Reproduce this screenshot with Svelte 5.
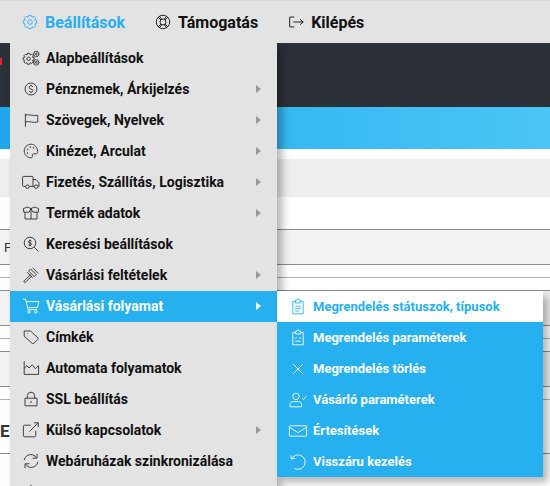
<script>
  const c = (x, y, r) => `M${x - r} ${y}a${r} ${r} 0 1 0 ${2 * r} 0a${r} ${r} 0 1 0 ${-2 * r} 0`;

  function gear(x, y, outer, inner, teeth = 8) {
    let d = '';
    const step = (Math.PI * 2) / teeth;
    for (let i = 0; i < teeth; i++) {
      const a = i * step;
      const pts = [
        [inner, a - step * 0.5],
        [outer, a - step * 0.25],
        [outer, a + step * 0.25]
      ];
      for (const [r, t] of pts) {
        d += `${d ? 'L' : 'M'}${(x + r * Math.cos(t)).toFixed(2)} ${(y + r * Math.sin(t)).toFixed(2)}`;
      }
    }
    return d + 'Z';
  }

  const icons = {
    gear: gear(10, 10, 7.5, 5.8) + c(10, 10, 2.6),
    lifering: c(10, 10, 7.5) + c(10, 10, 3.3) + 'M4.7 4.7l3 3M15.3 4.7l-3 3M4.7 15.3l3-3M15.3 15.3l-3-3M6.2 3.6l2.2 3.2M13.8 3.6l-2.2 3.2M6.2 16.4l2.2-3.2M13.8 16.4l-2.2-3.2',
    logout: 'M8 4.5H3v11h5M7 10h11M14.5 7l3.5 3-3.5 3',
    gears: gear(7, 11, 7, 5.2) + c(7, 11, 2.2) + gear(16.5, 5, 3.6, 2.6, 6) + c(16.5, 5, 1.1) + gear(16.5, 15.5, 3.6, 2.6, 6) + c(16.5, 15.5, 1.1),
    dollar: c(10, 10, 7.5) + 'M12.4 7.6C12 6.4 11 6 10 6 8.6 6 7.6 6.8 7.6 8c0 2.8 4.8 1.4 4.8 4 0 1.2-1 2-2.4 2-1.1 0-2-.5-2.4-1.6M10 4.8V6M10 14v1.2',
    flag: 'M3 2V18.5M3 4c5-1.8 10 1.8 15.5 0v8.5c-5.5 1.8-10.5-1.8-15.5 0',
    palette: 'M10 1.5C5.3 1.5 1.5 5.3 1.5 10s3.8 8.5 8.5 8.5c1.5 0 2-1.1 1.7-2.2-.4-1.4.3-2.8 2-2.8h2.7c1.3 0 1.9-1 1.9-2.8 0-5.1-3.800-9.200-8.300-9.200z' + c(5.8, 8, .5) + c(9, 5, .5) + c(13.2, 6, .5) + c(5.8, 12.5, .5),
    truck: 'M3 15.5H.5a1 1 0 0 1-1-1V4a1 1 0 0 1 1-1h11a1 1 0 0 1 1 1v11.5H8M12.500 7h4l3.500 4v4.500h-1M12.500 15.500H14' + c(5.5, 15.8, 2.2) + c(16.5, 15.8, 2.2),
    box: 'M2.5 9v8.5h15V9M.5 4.500L5.500 2.500 10 4.500 7.500 9H1zM19.500 4.500L14.500 2.500 10 4.500 12.500 9H19zM10 4.500v13',
    searchDollar: c(8.7, 8.7, 7.2) + 'M14 14l5 5M10.700 6.800c-.3-.8-1-1.200-2-1.200-1.100 0-2 .6-2 1.500 0 2.200 4.100 1.100 4.100 3.300 0 .9-.9 1.500-2.100 1.500-.9 0-1.700-.4-2-1.200M8.700 4.500V13',
    gavel: 'M9.500 2.500l7 7-2.500 2.500-7-7zM12 1l7 7M5 6.500l7 7M9.500 9.500L1.500 17.300a1.200 1.200 0 0 0 1.700 1.700l8-7.900',
    cart: 'M0 1.500h3.300l3 13h11.500M4 4.500H20l-2 7.500H5.700' + c(7.5, 17.3, 1.5) + c(16, 17.3, 1.5),
    tag: 'M1.500 2.500h8l9 8.500a1.400 1.400 0 0 1 0 2l-5 5a1.400 1.400 0 0 1-2 0l-10-9zM5.500 6h.8',
    chart: 'M1.500 1.500v16.500h18V7l-4 4-4-5-4 4-2.500-3-3.500 3.500',
    lock: 'M2.500 9h15v9.500h-15zM5.500 9V6a4.500 4.500 0 0 1 9 0v3M10 12.500v2.500',
    external: 'M16 11v6a1.500 1.500 0 0 1-1.500 1.500H2A1.500 1.500 0 0 1 .5 17V5.500A1.500 1.500 0 0 1 2 4h7.500M8 12L19 1M13.500 1H19v5.500',
    sync: 'M1.500 9C2 5 5.500 2 9.800 2c3 0 5.300 1.300 6.700 3.800M17.500 1v5.500h-5.500M18.500 11c-.5 4-4 7-8.300 7-3 0-5.300-1.300-6.700-3.800M2.500 19v-5.500h5.500',
    last: 'M10 1v8',
    clipboard: 'M7 3H3.500v15.500h13V3H13M7 1.500h1.500a1.500 1.500 0 0 1 3 0H13V5H7zM6.500 9h7M6.500 12h7M6.500 15h5',
    clipboardCheck: 'M7 3H3.500v15.500h13V3H13M7 1.500h1.500a1.500 1.500 0 0 1 3 0H13V5H7zM6 9.500l1 1 1.500-1.500M11 10h3M6.500 14h7',
    cross: 'M4 4l12 12M16 4L4 16',
    userCheck: c(7.5, 5.5, 4) + 'M0 18.500v-2.500c0-2.500 2-4 4.500-4h6c2.500 0 4 1.500 4 4v2.500zM15 7.500l1.800 1.800 3.700-3.800',
    mail: 'M0 3.500h20a.8.8 0 0 1 .8.8v11.400a.8.8 0 0 1-.8.8H0a.8.8 0 0 1-.8-.8V4.300a.8.8 0 0 1 .8-.8zM-.5 5.500L10 12l10.500-6.500',
    undo: 'M1 1.500l.8 4.800 4.800-.8M1.800 6.300A9 9 0 1 1 6 18.200'
  };

  const menu = [
    { label: 'Alapbeállítások', icon: 'gears' },
    { label: 'Pénznemek, Árkijelzés', icon: 'dollar', sub: true },
    { label: 'Szövegek, Nyelvek', icon: 'flag', sub: true },
    { label: 'Kinézet, Arculat', icon: 'palette', sub: true },
    { label: 'Fizetés, Szállítás, Logisztika', icon: 'truck', sub: true },
    { label: 'Termék adatok', icon: 'box', sub: true },
    { label: 'Keresési beállítások', icon: 'searchDollar' },
    { label: 'Vásárlási feltételek', icon: 'gavel', sub: true },
    { label: 'Vásárlási folyamat', icon: 'cart', sub: true, active: true },
    { label: 'Címkék', icon: 'tag' },
    { label: 'Automata folyamatok', icon: 'chart' },
    { label: 'SSL beállítás', icon: 'lock' },
    { label: 'Külső kapcsolatok', icon: 'external', sub: true },
    { label: 'Webáruházak szinkronizálása', icon: 'sync' },
    { label: '', icon: 'last' }
  ];

  const submenu = [
    { label: 'Megrendelés státuszok, típusok', icon: 'clipboard', active: true },
    { label: 'Megrendelés paraméterek', icon: 'clipboardCheck' },
    { label: 'Megrendelés törlés', icon: 'cross' },
    { label: 'Vásárló paraméterek', icon: 'userCheck' },
    { label: 'Értesítések', icon: 'mail' },
    { label: 'Visszáru kezelés', icon: 'undo' }
  ];

  const rows = [
    { cls: 'r35 tint', text: 'F', type: 'plain' },
    { cls: 'r13' },
    { cls: 'r13' },
    { cls: 'r35 tint' },
    { cls: 'r13' },
    { cls: 'r13' },
    { cls: 'r35 tint' },
    { cls: 'r13' },
    { cls: 'r54', text: 'E', type: 'strong' },
    { cls: 'r54' }
  ];
</script>

{#snippet icon(name)}
  <svg viewBox="0 0 20 20" aria-hidden="true"><path d={icons[name]} /></svg>
{/snippet}

<div class="page">
  <nav class="topbar">
    <a class="top-link current">{@render icon('gear')}Beállítások</a>
    <a class="top-link">{@render icon('lifering')}Támogatás</a>
    <a class="top-link">{@render icon('logout')}Kilépés</a>
  </nav>

  <header class="dark"><span class="alert"></span></header>
  <div class="band"></div>
  <div class="gray-box"></div>

  <div class="table">
    {#each rows as row}
      <div class="row {row.cls}">
        {#if row.text}<span class={row.type}>{row.text}</span>{/if}
      </div>
    {/each}
  </div>

  <ul class="menu">
    {#each menu as item}
      <li class="item" class:active={item.active}>
        {@render icon(item.icon)}
        <span>{item.label}</span>
        {#if item.sub}<i class="arrow"></i>{/if}
      </li>
    {/each}
  </ul>

  <ul class="submenu">
    {#each submenu as item}
      <li class="sub-item" class:active={item.active}>
        {@render icon(item.icon)}
        <span>{item.label}</span>
      </li>
    {/each}
  </ul>
</div>

<style>
  :global(body) {
    margin: 0;
    background: #fff;
  }

  .page {
    position: relative;
    height: 486px;
    overflow: hidden;
    font-family: Roboto, "Liberation Sans", sans-serif;
    color: #111;
  }

  svg {
    flex: none;
    width: 16px;
    height: 16px;
    overflow: visible;
    fill: none;
    stroke: currentColor;
    stroke-width: 1.1;
  }

  .topbar {
    position: relative;
    z-index: 2;
    display: flex;
    align-items: center;
    height: 42px;
    padding-left: 21px;
    gap: 29px;
    background: #e3e3e3;
    border-top: 1px solid #d9d9d9;
  }

  .top-link {
    display: flex;
    align-items: center;
    gap: 6px;
    font-size: 16px;
    font-weight: 700;
    color: #111;
  }

  .top-link svg {
    width: 18px;
    height: 18px;
    stroke-width: 1;
  }

  .top-link.current {
    color: #27b0f0;
  }

  .dark {
    height: 64px;
    background: #2c3039;
    position: relative;
  }

  .alert {
    position: absolute;
    left: 0;
    top: 15px;
    width: 2px;
    height: 7px;
    background: #e0262e;
  }

  .band {
    height: 42px;
    background: linear-gradient(90deg, #1fa9ec, #4ac6f6);
  }

  .gray-box {
    height: 38px;
    margin: 10px 0 32px;
    background: #eee;
  }

  .table {
    border-top: 1px solid #8c8c8c;
  }

  .row {
    display: flex;
    align-items: center;
    padding-left: 4px;
    border-bottom: 1px solid #8c8c8c;
    box-sizing: border-box;
    font-size: 13px;
    color: #333;
  }

  .row:nth-child(2),
  .row:nth-child(5),
  .row:nth-child(8) {
    border-bottom-color: #b0b0b0;
  }

  .r13 {
    height: 13px;
  }

  .r35 {
    height: 35px;
  }

  .r54 {
    height: 54px;
  }

  .tint {
    background: #f2f2f2;
  }

  .strong {
    font-size: 17px;
    font-weight: 700;
    margin-left: -4px;
    margin-top: 8px;
  }

  .menu,
  .submenu {
    list-style: none;
    margin: 0;
    padding: 0;
    position: absolute;
    box-shadow: 5px 5px 8px rgba(0, 0, 0, 0.3);
  }

  .menu {
    left: 10px;
    top: 43px;
    width: 267px;
    background: #e3e3e3;
  }

  .item,
  .sub-item {
    display: flex;
    align-items: center;
    box-sizing: border-box;
    height: 31px;
    padding: 0 0 2px 13px;
    gap: 7px;
    font-weight: 700;
  }

  .item {
    font-size: 14px;
    position: relative;
    color: #111;
  }

  .item svg {
    stroke: #2a2a2a;
  }

  .item.active {
    background: #27b0f0;
    color: #fff;
  }

  .item.active svg {
    stroke: #fff;
  }

  .arrow {
    position: absolute;
    left: 246px;
    top: 11px;
    border-left: 5px solid #999;
    border-top: 4.5px solid transparent;
    border-bottom: 4.5px solid transparent;
  }

  .item.active .arrow {
    border-left-color: #fff;
  }

  .submenu {
    left: 277px;
    top: 291px;
    width: 266px;
    background: #27b0f0;
  }

  .sub-item {
    font-size: 13px;
    color: #fff;
    padding-bottom: 0;
  }

  .sub-item.active {
    background: #fff;
    color: #27b0f0;
  }
</style>
